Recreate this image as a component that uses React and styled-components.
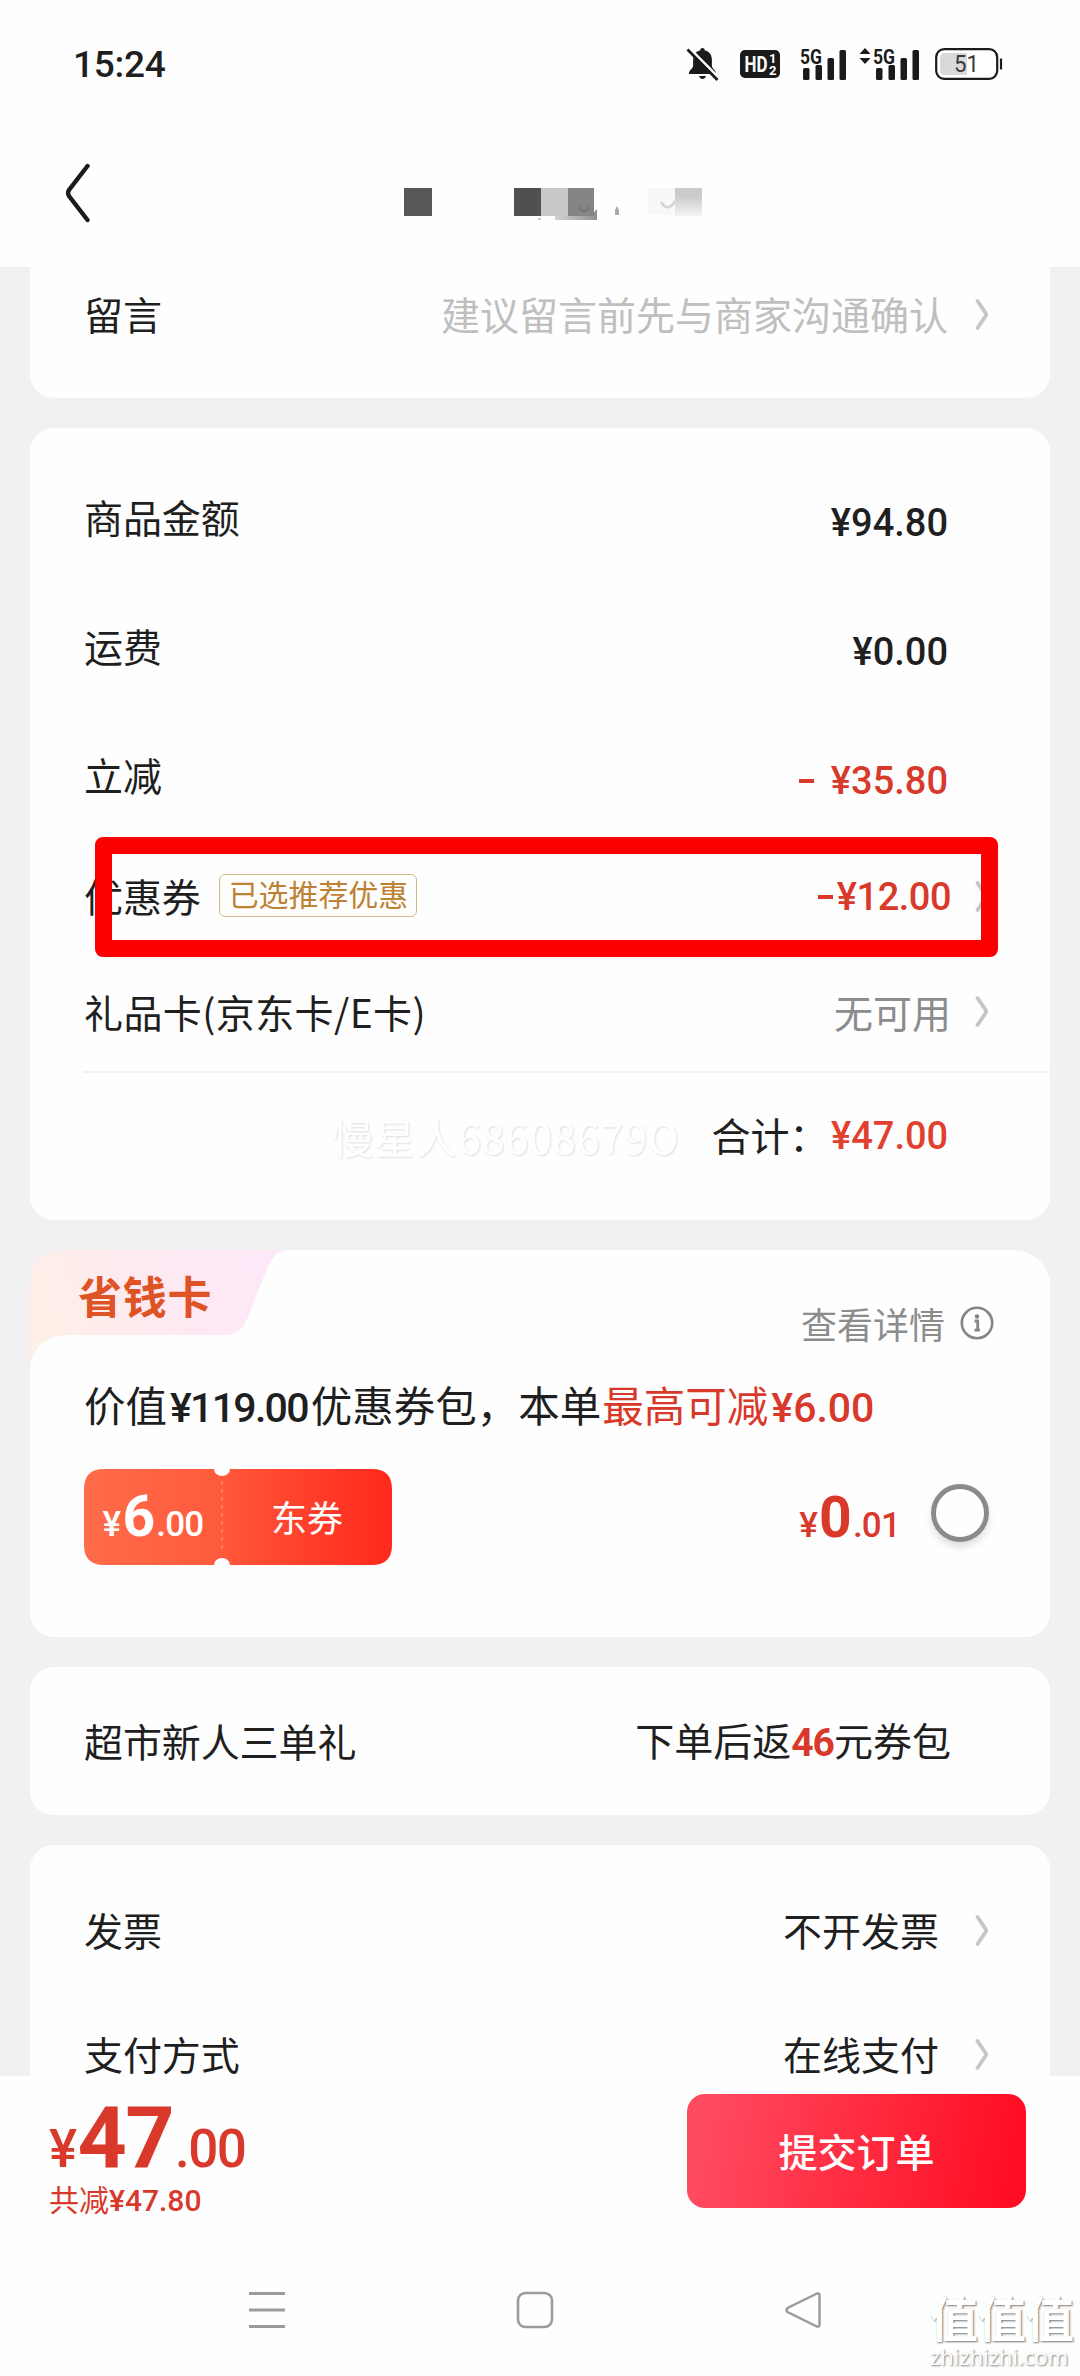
import React from "react"
import styled, { createGlobalStyle } from "styled-components"

const Colors = {
  page: "#f1f1f1",
  white: "#fefefe",
  black: "#1f1f1f",
  grey: "#8c8c8c",
  lightGrey: "#bfbfbf",
  red: "#d8392b",
  gold: "#bd8233",
}

const cjk = `"Noto Sans CJK SC", "Noto Sans", sans-serif`
const latin = `Roboto, "Noto Sans CJK SC", sans-serif`

const Chevron = () => (
  <ChevronIcon viewBox="0 0 14 31">
    <path
      d="M2.500 2 L10.600 14 Q11.600 15.500 10.600 17 L2.500 29"
      fill="none"
      stroke="#c6c6c6"
      strokeWidth="3.800"
      strokeLinecap="round"
    />
  </ChevronIcon>
)

const Signal = () => (
  <svg width="47" height="44" viewBox="0 -5 47 44">
    <SignalText x="0" y="17" textLength="22" lengthAdjust="spacingAndGlyphs">
      5G
    </SignalText>
    <g fill="#1b1b1b">
      <rect x="3" y="21" width="6.5" height="12" rx="1.5" />
      <rect x="15.5" y="18" width="6.5" height="15" rx="1.5" />
      <rect x="27.5" y="11" width="6.5" height="22" rx="1.5" />
      <rect x="39.5" y="3" width="6.5" height="30" rx="1.5" />
    </g>
  </svg>
)

const StatusBar = () => (
  <Status>
    <Clock>15:24</Clock>
    <StatusIcons>
      <svg width="34" height="35" viewBox="0 0 34 35">
        <path
          d="M16.5 1 q2.2 0 2.4 2.4 c5 1.2 7 5 7 9.6 v6 c0 2 3.6 4.5 4 6.5 v1.5 H3 v-1.5 c.4-2 4.1-4.5 4.1-6.5 v-6 c0-4.6 2-8.4 7-9.6 Q14.3 1 16.5 1z M13 29 h7 q-1 3-3.5 3 t-3.5-3z"
          fill="#1b1b1b"
        />
        <path d="M3 1 L33 31" stroke="#fff" strokeWidth="3" />
        <path d="M1.5 2.5 L31.5 33" stroke="#1b1b1b" strokeWidth="2.7" />
      </svg>
      <svg width="40" height="28" viewBox="0 0 40 28">
        <rect width="40" height="28" rx="5" fill="#1b1b1b" />
        <HdText x="4.5" y="22" fontSize="22" textLength="23" lengthAdjust="spacingAndGlyphs">
          HD
        </HdText>
        <HdText x="29" y="13" fontSize="13">
          1
        </HdText>
        <HdText x="29" y="25" fontSize="13">
          2
        </HdText>
      </svg>
      <Signal />
      <SecondSignal>
        <svg width="12" height="44" viewBox="0 -5 12 44">
          <path d="M6 1 L11.5 7 H.5z M6 17 L.5 11 H11.5z" fill="#1b1b1b" />
        </svg>
        <Signal />
      </SecondSignal>
      <svg width="68" height="32" viewBox="0 0 68 32">
        <rect x="1.2" y="1.2" width="61" height="29.6" rx="8" fill="#fff" stroke="#1b1b1b" strokeWidth="2.2" />
        <path d="M10 5 H32 V27 H10 q-5 0-5-5 V10 q0-5 5-5z" fill="#d9d9d9" />
        <path d="M66 10.5 V21.5" stroke="#1b1b1b" strokeWidth="2.2" />
        <BatteryText x="19" y="24" textLength="25" lengthAdjust="spacingAndGlyphs">
          51
        </BatteryText>
      </svg>
    </StatusIcons>
  </Status>
)

const TitleMosaic = () => (
  <Mosaic viewBox="0 0 300 34">
    <defs>
      <linearGradient id="fade" x1="0" y1="0" x2="0" y2="1">
        <stop offset=".3" stopColor="#cbcbcb" />
        <stop offset="1" stopColor="#f4f4f4" />
      </linearGradient>
      <linearGradient id="under" x1="0" y1="0" x2="1" y2="0">
        <stop offset="0" stopColor="#d2d2d2" />
        <stop offset="1" stopColor="#8f8f8f" />
      </linearGradient>
    </defs>
    <path d="M151 28 L156 24 H190 L193 21 V32 H151z" fill="url(#under)" />
    <rect width="28" height="28" fill="#575757" />
    <rect x="110" width="27" height="28" fill="#505050" />
    <rect x="137" width="27" height="28" fill="#c8c8c8" />
    <rect x="164" width="26" height="28" fill="#848484" />
    <path d="M175 19 Q180 27 185 19" fill="none" stroke="#747474" strokeWidth="2" />
    <path d="M134 30 h3 v2 h-3z" fill="#c8c8c8" />
    <path d="M211 27 V22 L213 18 L215 22 V27z" fill="#a8a8a8" />
    <rect x="244" width="27" height="27" fill="#f8f8f8" />
    <path d="M257 14 Q264 25 271 13" fill="none" stroke="#d4d4d4" strokeWidth="2.5" />
    <rect x="271" width="27" height="28" fill="url(#fade)" />
  </Mosaic>
)

const SavingCard = () => (
  <Card height={387} top={36}>
    <BadgeShape viewBox="0 0 262 120">
      <defs>
        <linearGradient id="badge" x1="0" y1=".5" x2="1" y2=".3">
          <stop offset="0" stopColor="#ffefe6" />
          <stop offset=".5" stopColor="#fde9f1" />
          <stop offset="1" stopColor="#fde8f8" />
        </linearGradient>
      </defs>
      <path
        d="M0 34 Q0 0 36 0 H258 Q245 1 239 14 L217 69 Q211 85 196 85 H36 Q4 87 0 118z"
        fill="url(#badge)"
      />
    </BadgeShape>
    <SavingHead>
      <SavingTitle>省钱卡</SavingTitle>
      <Detail>
        查看详情
        <svg width="34" height="34" viewBox="0 0 34 34">
          <circle cx="17" cy="17" r="15.2" fill="none" stroke="#858585" strokeWidth="2.6" />
          <circle cx="17" cy="10.5" r="2.2" fill="#858585" />
          <path d="M14.5 15 H17.700 V24 M14.5 24.2 H20" fill="none" stroke="#858585" strokeWidth="2.8" />
        </svg>
      </Detail>
    </SavingHead>
    <SavingText>
      价值<Num tight>¥119.00</Num>优惠券包，本单
      <Hot>
        最高可减<Num>¥6.00</Num>
      </Hot>
    </SavingText>
    <SavingRow>
      <Coupon>
        <CouponShape viewBox="0 0 308 96">
          <defs>
            <linearGradient id="coupon" x1="0" y1="0" x2="1" y2="0">
              <stop offset="0" stopColor="#ff6c49" />
              <stop offset=".42" stopColor="#ff5b3d" />
              <stop offset=".6" stopColor="#ff4a32" />
              <stop offset="1" stopColor="#ff281c" />
            </linearGradient>
          </defs>
          <path
            d="M20 0 H130 A8 7 0 0 0 146 0 H288 Q308 0 308 20 V76 Q308 96 288 96 H146 A8 7 0 0 0 130 96 H20 Q0 96 0 76 V20 Q0 0 20 0z"
            fill="url(#coupon)"
          />
          <path d="M138 12 V84" stroke="#ff8a70" strokeWidth="1.5" strokeDasharray="4 4" />
        </CouponShape>
        <CouponSide width={138}>
          <SavingAmount size={35} big={57}>
            ¥<b>6</b>.00
          </SavingAmount>
        </CouponSide>
        <CouponSide width={170}>东券</CouponSide>
      </Coupon>
      <SavingPrice>
        <SavingAmount size={35} big={57} red>
          ¥<b>0</b>.01
        </SavingAmount>
        <Radio />
      </SavingPrice>
    </SavingRow>
  </Card>
)

const App = () => {
  return (
    <Page>
      <GlobalStyle />
      <StatusBar />
      <Header>
        <svg width="26" height="60" viewBox="0 0 26 60">
          <path
            d="M22.5 3 L4 27 Q2.2 30 4 33 L22.5 57"
            fill="none"
            stroke="#1b1b1b"
            strokeWidth="4.4"
            strokeLinecap="round"
          />
        </svg>
        <TitleMosaic />
      </Header>

      <Content>
        <Card height={131} flat>
          <Row height={96}>
            <Label>留言</Label>
            <Value tone={Colors.lightGrey}>建议留言前先与商家沟通确认</Value>
            <Slot>
              <Chevron />
            </Slot>
          </Row>
        </Card>

        <Card height={792} pad={25}>
          <Row height={129}>
            <Label>商品金额</Label>
            <Price>¥94.80</Price>
            <Slot />
          </Row>
          <Row height={129}>
            <Label>运费</Label>
            <Price>¥0.00</Price>
            <Slot />
          </Row>
          <Row height={129}>
            <Label>立减</Label>
            <Price red>
              <Minus wide />
              ¥35.80
            </Price>
            <Slot />
          </Row>
          <Row height={114}>
            <Label>优惠券</Label>
            <Tag>已选推荐优惠</Tag>
            <CouponPrice red>
              <Minus />
              ¥12.00
            </CouponPrice>
            <Slot>
              <Chevron />
            </Slot>
            <Highlight />
          </Row>
          <Row height={117}>
            <GiftLabel>礼品卡(京东卡/E卡)</GiftLabel>
            <Value tone={Colors.grey} shift={3}>
              无可用
            </Value>
            <Slot>
              <Chevron />
            </Slot>
          </Row>
          <Divider />
          <Row height={124}>
            <Signature>慢星人68608679O</Signature>
            <TotalLabel>合计：</TotalLabel>
            <TotalPrice red>¥47.00</TotalPrice>
            <Slot />
          </Row>
        </Card>

        <SavingCard />

        <Card height={148}>
          <Row height={150}>
            <Label>超市新人三单礼</Label>
            <Value shift={3}>
              下单后返<Bonus>46</Bonus>元券包
            </Value>
            <Slot />
          </Row>
        </Card>

        <Card height={231} pad={24} flatBottom>
          <Row height={124}>
            <Label>发票</Label>
            <Value shift={1}>不开发票</Value>
            <Slot wide>
              <Chevron />
            </Slot>
          </Row>
          <Row height={124}>
            <Label>支付方式</Label>
            <Value shift={1}>在线支付</Value>
            <Slot wide>
              <Chevron />
            </Slot>
          </Row>
        </Card>
      </Content>

      <Footer>
        <div>
          <FooterAmount size={53} big={86} red>
            ¥<b>47</b>.00
          </FooterAmount>
          <Saved>
            共减<span>¥47.80</span>
          </Saved>
        </div>
        <Submit>提交订单</Submit>
      </Footer>

      <NavBar>
        <svg width="38" height="38" viewBox="0 0 38 38">
          <path d="M1 2.5 H37 M1 19 H37 M1 35.5 H37" stroke="#9b9b9b" strokeWidth="3" />
        </svg>
        <svg width="38" height="38" viewBox="0 0 38 38">
          <rect x="2" y="2" width="34" height="34" rx="7.5" fill="none" stroke="#9b9b9b" strokeWidth="2.6" />
        </svg>
        <svg width="38" height="38" viewBox="0 0 38 38">
          <path
            d="M33 2.5 L3.5 17 Q1.5 19 3.5 21 L33 35.5 Q35.5 36 35.5 33.5 V4.5 Q35.5 2 33 2.5z"
            fill="none"
            stroke="#9b9b9b"
            strokeWidth="2.5"
          />
        </svg>
        <SiteMark>
          <strong>值值值</strong>
          <span>zhizhizhi.com</span>
        </SiteMark>
      </NavBar>
    </Page>
  )
}

export default App

const GlobalStyle = createGlobalStyle`
  * {
    box-sizing: border-box;
  }
  body {
    margin: 0;
    background: ${Colors.white};
    font-family: ${cjk};
    color: ${Colors.black};
  }
  svg {
    display: block;
    flex: none;
  }
`
const Page = styled.div`
  display: flex;
  flex-direction: column;
  width: 1080px;
  height: 2376px;
  overflow: hidden;
  white-space: nowrap;
`
const Status = styled.div`
  display: flex;
  justify-content: space-between;
  align-items: center;
  height: 130px;
  padding: 0 77px 0 73px;
  background: ${Colors.white};
`
const Clock = styled.div`
  font: 500 37px/40px ${latin};
  letter-spacing: -0.3px;
`
const StatusIcons = styled.div`
  display: flex;
  align-items: center;
  gap: 20px;
  margin-bottom: 2px;
`
const SecondSignal = styled.div`
  display: flex;
  gap: 2px;
  margin-left: -8px;
  margin-right: -5px;
`
const SignalText = styled.text`
  font: 700 20px ${latin};
  fill: #1b1b1b;
`
const HdText = styled.text`
  font-family: ${latin};
  font-weight: 700;
  fill: #fff;
`
const BatteryText = styled.text`
  font: 400 24px ${latin};
  fill: #3a3a3a;
`
const Header = styled.header`
  display: flex;
  align-items: flex-start;
  height: 137px;
  padding: 33px 0 0 65px;
  background: ${Colors.white};
`
const Mosaic = styled.svg`
  width: 300px;
  height: 34px;
  margin: 25px 0 0 313px;
`
const Content = styled.main`
  display: flex;
  flex-direction: column;
  gap: 30px;
  height: 1809px;
  padding: 0 30px;
  background: ${Colors.page};
  overflow: hidden;
`
const Card = styled.section.withConfig({
  shouldForwardProp: p => !["height", "pad", "top", "flat", "flatBottom"].includes(p),
})`
  position: relative;
  flex: none;
  height: ${p => p.height}px;
  padding-top: ${p => p.pad || 0}px;
  background: ${Colors.white};
  border-radius: ${p => (p.flat ? 0 : p.top || 24)}px ${p => (p.flat ? 0 : p.top || 24)}px
    ${p => (p.flatBottom ? "0 0" : "24px 24px")};
`
const Row = styled.div.withConfig({ shouldForwardProp: p => p !== "height" })`
  position: relative;
  display: flex;
  align-items: center;
  height: ${p => p.height}px;
  padding: 0 61px 0 54px;
`
const Label = styled.div`
  margin-bottom: 4px;
  font-size: 39px;
  line-height: 48px;
  letter-spacing: -0.1px;
`
const GiftLabel = styled(Label)`
  letter-spacing: 0.4px;
`
const Value = styled.div.withConfig({
  shouldForwardProp: p => p !== "tone" && p !== "shift",
})`
  margin-left: auto;
  margin-right: ${p => -(p.shift || 0)}px;
  margin-bottom: 4px;
  font-size: 39px;
  line-height: 48px;
  color: ${p => p.tone || Colors.black};
`
const Slot = styled.div.withConfig({ shouldForwardProp: p => p !== "wide" })`
  display: flex;
  justify-content: flex-end;
  width: ${p => (p.wide ? 51 : 41)}px;
`
const ChevronIcon = styled.svg`
  width: 14px;
  height: 31px;
  margin-bottom: 2px;
`
const Price = styled.div.withConfig({ shouldForwardProp: p => p !== "red" })`
  display: flex;
  align-items: center;
  margin-left: auto;
  padding-top: 11px;
  font: 500 38px/40px ${latin};
  color: ${p => (p.red ? Colors.red : Colors.black)};
`
const CouponPrice = styled(Price)`
  margin-right: -3px;
  padding-top: 0;
  letter-spacing: -0.5px;
`
const TotalPrice = styled(Price)`
  margin-left: 0;
  padding-top: 2px;
  color: #e2402f;
`
const Minus = styled.i.withConfig({ shouldForwardProp: p => p !== "wide" })`
  width: 15px;
  height: 4px;
  margin-right: ${p => (p.wide ? 17 : 4)}px;
  background: currentColor;
`
const Tag = styled.div`
  height: 43px;
  margin: 0 0 3px 18px;
  padding: 0 8px 0 9px;
  border: 1.5px solid #d3b98c;
  border-radius: 6px;
  font-size: 30px;
  line-height: 37px;
  letter-spacing: -0.1px;
  color: ${Colors.gold};
`
const Highlight = styled.div`
  position: absolute;
  left: 65px;
  top: -3px;
  width: 903px;
  height: 120px;
  border: 17px solid #fb0000;
  border-radius: 8px;
`
const Divider = styled.div`
  height: 2px;
  margin-left: 54px;
  background: #f1f1f1;
`
const Signature = styled.div`
  margin-left: 248px;
  margin-top: 1px;
  width: 352px;
  font-size: 41px;
  line-height: 48px;
  letter-spacing: 1px;
  color: #fff;
  text-shadow: 1px 1px 2px #dedee0;
`
const TotalLabel = styled(Label)`
  width: 120px;
  margin-left: 29px;
  margin-right: auto;
  margin-bottom: 2px;
`
const BadgeShape = styled.svg`
  position: absolute;
  left: 0;
  top: 0;
  width: 262px;
  height: 120px;
`
const SavingHead = styled.div`
  position: relative;
  display: flex;
  justify-content: space-between;
  height: 122px;
  padding: 18px 56px 0 48px;
`
const SavingTitle = styled.div`
  font-size: 44px;
  font-weight: 700;
  line-height: 54px;
  letter-spacing: 0.7px;
  color: #df5426;
`
const Detail = styled.div`
  display: flex;
  align-items: center;
  gap: 15px;
  height: 54px;
  margin-top: 28px;
  font-size: 36px;
  color: ${Colors.grey};
`
const SavingText = styled.div`
  height: 97px;
  padding: 5px 0 0 54px;
  font-size: 41.5px;
  line-height: 54px;
`
const Num = styled.span.withConfig({ shouldForwardProp: p => p !== "tight" })`
  margin: 0 3px;
  font: 500 41px ${latin};
  letter-spacing: ${p => (p.tight ? -1.7 : 0)}px;
`
const Hot = styled.span`
  margin-left: 1px;
  color: ${Colors.red};
`
const SavingRow = styled.div`
  display: flex;
  justify-content: space-between;
  padding: 0 61px 0 54px;
`
const Coupon = styled.div`
  position: relative;
  display: flex;
  width: 308px;
  height: 96px;
  color: #fff;
`
const CouponShape = styled.svg`
  position: absolute;
  inset: 0;
`
const CouponSide = styled.div.withConfig({ shouldForwardProp: p => p !== "width" })`
  position: relative;
  display: flex;
  justify-content: center;
  align-items: center;
  width: ${p => p.width}px;
  padding-bottom: 2px;
  font-size: 36px;
`
const Amount = styled.div.withConfig({
  shouldForwardProp: p => !["size", "big", "red"].includes(p),
})`
  font: 500 ${p => p.size}px/60px ${latin};
  color: ${p => (p.red ? Colors.red : "#fff")};
  b {
    margin: 0 2px;
    font-size: ${p => p.big}px;
    font-weight: 700;
  }
`
const SavingAmount = styled(Amount)`
  margin-top: 9px;
  letter-spacing: -0.8px;
`
const SavingPrice = styled.div`
  display: flex;
  align-items: center;
  gap: 31px;
`
const Radio = styled.div`
  width: 58px;
  height: 58px;
  margin-bottom: 8px;
  border: 5px solid #8b8b8b;
  border-radius: 50%;
  box-shadow: 0 5px 7px rgba(0, 0, 0, 0.12);
`
const Bonus = styled.span`
  font: 700 39px ${latin};
  letter-spacing: -1px;
  color: ${Colors.red};
`
const Footer = styled.footer`
  display: flex;
  justify-content: space-between;
  height: 164px;
  padding: 18px 54px 0 49px;
  background: ${Colors.white};
`
const FooterAmount = styled(Amount)`
  height: 88px;
  line-height: 88px;
  letter-spacing: -1.6px;
`
const Saved = styled.div`
  margin-top: -2px;
  font-size: 30px;
  line-height: 36px;
  color: ${Colors.red};
  span {
    font: 500 30px/36px ${latin};
  }
`
const Submit = styled.button`
  width: 339px;
  height: 114px;
  padding: 0 0 3px;
  border: 0;
  border-radius: 18px;
  background: linear-gradient(100deg, #ff4b60 5%, #ff0d22 95%);
  font: 500 39px ${cjk};
  color: #fff;
`
const NavBar = styled.nav`
  position: relative;
  display: flex;
  gap: 230px;
  height: 136px;
  padding: 51px 0 0 248px;
  background: ${Colors.white};
`
const SiteMark = styled.div`
  position: absolute;
  left: 930px;
  top: 48px;
  display: flex;
  flex-direction: column;
  color: #fff;
  text-shadow: 1px 1px 2px #777;
  strong {
    font-size: 48px;
    font-weight: 700;
    line-height: 56px;
  }
  span {
    font: 400 22px/24px "Open Sans", sans-serif;
  }
`
